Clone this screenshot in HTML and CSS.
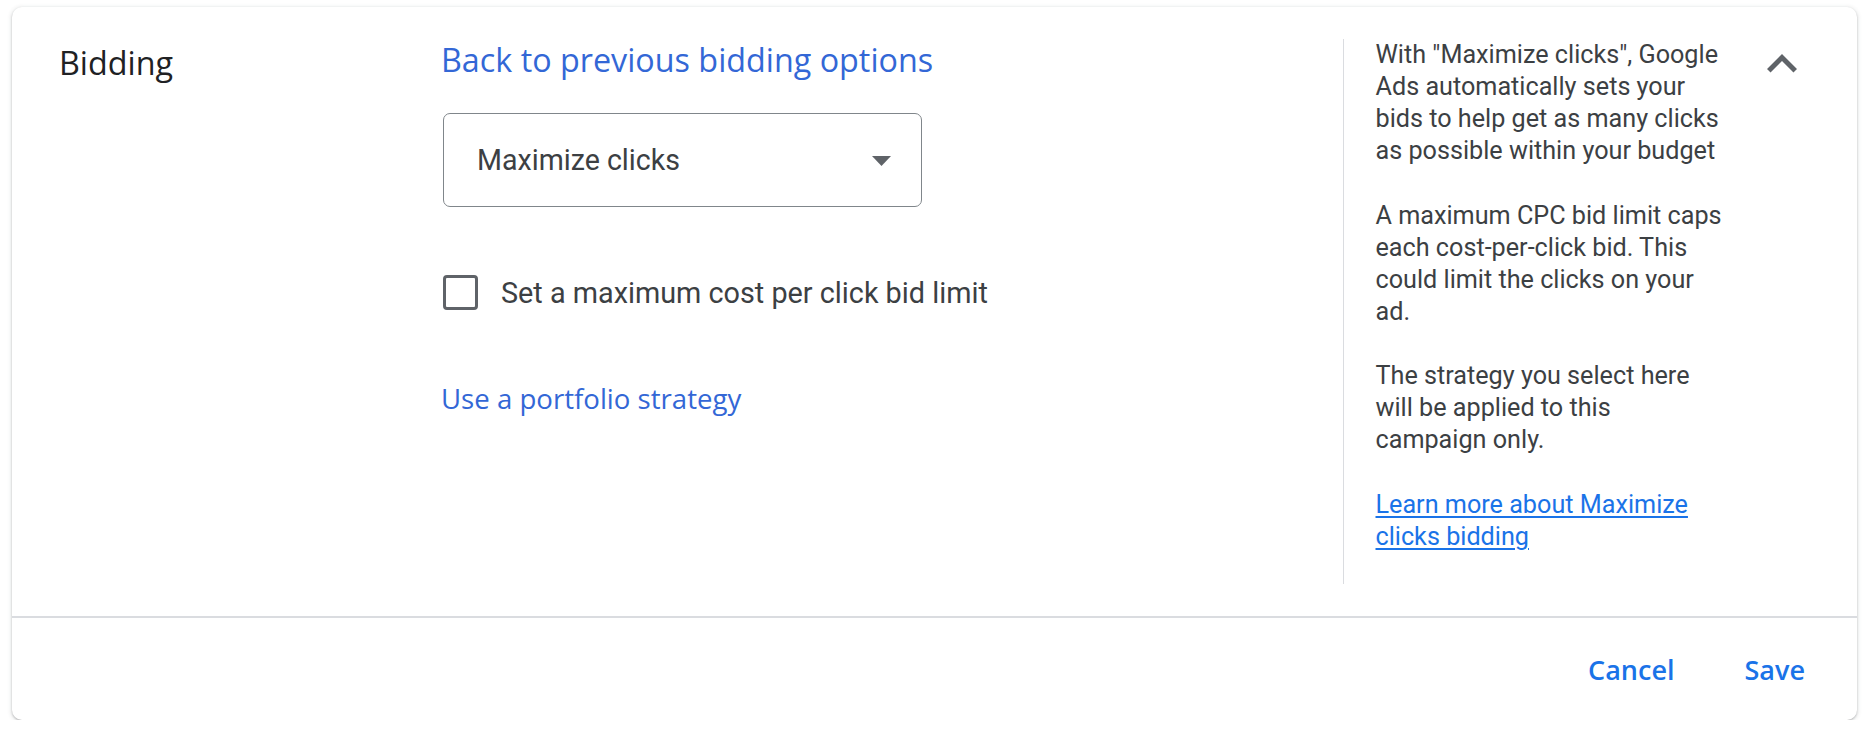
FILE: index.html
```html
<!DOCTYPE html>
<html lang="en">
<head>
<meta charset="utf-8">
<title>Bidding</title>
<link rel="stylesheet" href="styles.css">
</head>
<body>
<div class="page">
  <section class="card">
    <div class="card-body">
      <div class="title-col">
        <h2 class="title">Bidding</h2>
      </div>
      <div class="main-col">
        <a class="back-link" href="#">Back to previous bidding options</a>
        <div class="select">
          <span class="select-value">Maximize clicks</span>
          <svg class="select-arrow" width="19" height="10" viewBox="0 0 19 10"><polygon points="0,0 19,0 9.5,10" fill="#5f6368"/></svg>
        </div>
        <label class="check-row">
          <span class="checkbox"></span>
          <span class="check-label">Set a maximum cost per click bid limit</span>
        </label>
        <a class="portfolio-link" href="#">Use a portfolio strategy</a>
      </div>
      <aside class="help">
        <p>With "Maximize clicks", Google Ads automatically sets your bids to help get as many clicks as possible within your budget</p>
        <p>A maximum CPC bid limit caps each cost-per-click bid. This could limit the clicks on your ad.</p>
        <p>The strategy you select here will be applied to this campaign only.</p>
        <p><a class="help-link" href="#">Learn more about Maximize clicks bidding</a></p>
      </aside>
      <div class="collapse">
        <svg width="60" height="60" viewBox="0 0 24 24"><path d="M12 8l-6 6 1.41 1.41L12 10.83l4.59 4.58L18 14z" fill="#5f6368"/></svg>
      </div>
    </div>
    <div class="card-footer">
      <button class="btn" type="button">Cancel</button>
      <button class="btn" type="button">Save</button>
    </div>
  </section>
</div>
</body>
</html>
```
FILE: styles.css
```css
html, body {
  margin: 0;
  padding: 0;
  background: #ffffff;
}

.page {
  padding: 7px 11px 0 12px;
}

.card {
  width: 1845px;
  height: 713px;
  box-sizing: border-box;
  background: #ffffff;
  border-radius: 10px;
  box-shadow: 0 1px 2px 0 rgba(60, 64, 67, 0.30), 0 1px 4px 1px rgba(60, 64, 67, 0.12);
  display: flex;
  flex-direction: column;
  overflow: hidden;
}

.card-body {
  display: flex;
  align-items: flex-start;
  height: 609px;
  flex: 0 0 auto;
}

.title-col {
  flex: 0 0 431px;
  box-sizing: border-box;
  padding: 33px 0 0 47px;
}

.title {
  margin: 0;
  font-family: "Open Sans", "Roboto", sans-serif;
  font-size: 32.3px;
  line-height: 44px;
  font-weight: 400;
  color: #202124;
}

.main-col {
  flex: 0 0 900px;
  padding-top: 30px;
  display: flex;
  flex-direction: column;
  align-items: flex-start;
}

.back-link {
  font-family: "Open Sans", "Roboto", sans-serif;
  font-size: 32.3px;
  line-height: 44px;
  color: #3367d6;
  text-decoration: none;
  margin-left: -2px;
}

.select {
  margin-top: 32px;
  width: 479px;
  height: 94px;
  box-sizing: border-box;
  border: 1.8px solid #80868b;
  border-radius: 7px;
  display: flex;
  align-items: center;
  justify-content: space-between;
  padding: 0 30px 0 33px;
}

.select-value {
  font-family: "Roboto", sans-serif;
  font-size: 28.6px;
  color: #3c4043;
}

.select-arrow {
  display: block;
  margin-top: 2px;
}

.check-row {
  margin-top: 68px;
  display: flex;
  align-items: center;
  gap: 23px;
  height: 35px;
}

.checkbox {
  width: 35px;
  height: 35px;
  box-sizing: border-box;
  border: 3.6px solid #5f6368;
  border-radius: 4px;
}

.check-label {
  font-family: "Roboto", sans-serif;
  font-size: 28.8px;
  color: #3c4043;
}

.portfolio-link {
  margin-top: 69px;
  margin-left: -2px;
  font-family: "Open Sans", "Roboto", sans-serif;
  font-size: 27.6px;
  color: #3367d6;
  text-decoration: none;
}

.help {
  flex: 0 0 auto;
  width: 352px;
  margin-top: 32px;
  border-left: 1.5px solid #dadce0;
  padding: 0 0 31px 31.5px;
  font-family: "Roboto", sans-serif;
  font-size: 25.2px;
  line-height: 32px;
  color: #3c4043;
}

.help p {
  margin: 0 0 32.5px 0;
}

.help p:last-child {
  margin-bottom: 0;
}

.help-link {
  color: #1a73e8;
  text-decoration: underline;
  text-underline-offset: 3px;
  text-decoration-thickness: 1.5px;
}

.collapse {
  margin: 27px 0 0 24px;
  width: 60px;
  height: 60px;
}

.collapse svg {
  display: block;
}

.card-footer {
  flex: 1 1 auto;
  border-top: 2px solid #dadce0;
  display: flex;
  justify-content: flex-end;
  align-items: center;
  gap: 42px;
  padding-right: 38px;
}

.btn {
  background: none;
  border: none;
  padding: 0 14px;
  font-family: "Open Sans", "Roboto", sans-serif;
  font-size: 27px;
  font-weight: 600;
  color: #1a73e8;
  cursor: pointer;
}
```
